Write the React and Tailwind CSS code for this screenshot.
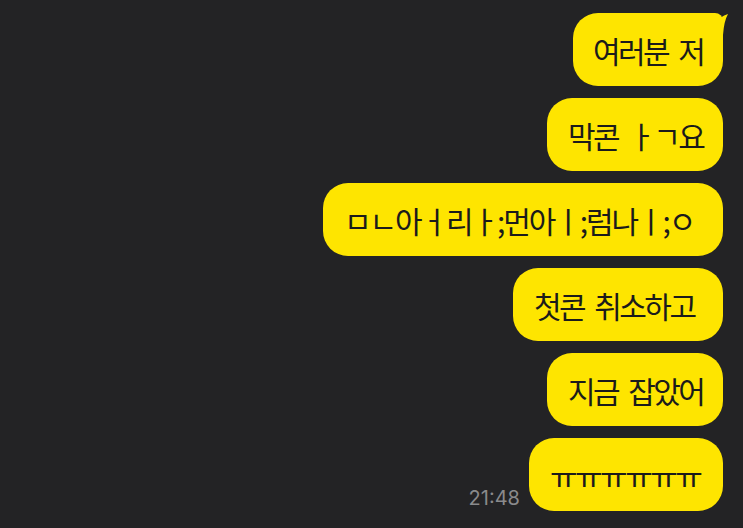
import React from "react";

const bubbles = [
  { text: "막콘 ㅏㄱ요", w: "w-[176px]", t: "tracking-[-0.085em]" },
  { text: "ㅁㄴ아ㅓ리ㅏ;먼아ㅣ;럼나ㅣ;ㅇ", w: "w-[400px]", t: "tracking-[-0.07em]" },
  { text: "첫콘 취소하고", w: "w-[210px]", t: "tracking-[-0.085em]" },
  { text: "지금 잡았어", w: "w-[176px]", t: "tracking-[-0.085em]" },
];

const textCls =
  "text-[30px] leading-none [word-spacing:6px] text-[#1b1b1b] whitespace-nowrap [font-family:'Noto_Sans_CJK_KR','Noto_Sans',sans-serif]";

export default function App() {
  return (
    <div className="w-[743px] h-[528px] overflow-hidden bg-[#232325] flex flex-col items-end pt-[13px] pr-[20px] gap-[12px]">
      <div className="relative w-[150px] h-[73px] bg-[#fee500] rounded-[25px] rounded-tr-[8px] flex items-center pl-[20px]">
        <span className={`${textCls} tracking-[-0.085em]`}>여러분 저</span>
        <svg
          className="absolute left-[136px] top-0"
          width="22"
          height="30"
          viewBox="0 0 22 30"
        >
          <path d="M5 12 Q 11 3 19 1 Q 15 8 14 22 L 5 22 Z" fill="#fee500" />
        </svg>
      </div>
      {bubbles.map((b) => (
        <div
          key={b.text}
          className={`${b.w} h-[73px] bg-[#fee500] rounded-[25px] flex items-center pl-[21px]`}
        >
          <span className={`${textCls} ${b.t}`}>{b.text}</span>
        </div>
      ))}
      <div className="flex items-end gap-[9px]">
        <span className="text-[20px] leading-none mb-[3px] text-[#8a8a8c] [font-family:Inter,'Liberation_Sans',sans-serif]">
          21:48
        </span>
        <div className="w-[194px] h-[73px] bg-[#fee500] rounded-[25px] flex items-center pl-[21px]">
          <span className={`${textCls} tracking-[-0.085em]`}>ㅠㅠㅠㅠㅠㅠ</span>
        </div>
      </div>
    </div>
  );
}
